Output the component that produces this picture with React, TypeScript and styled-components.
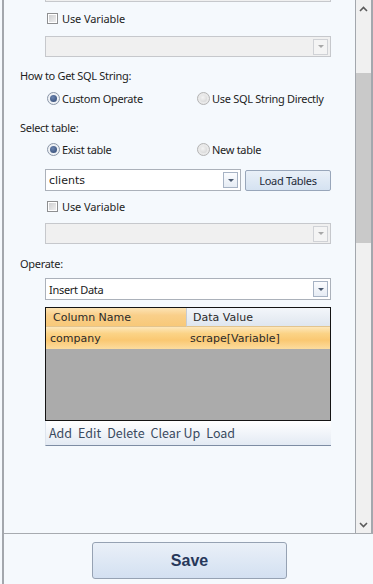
import styled, { createGlobalStyle } from 'styled-components';

const GlobalStyle = createGlobalStyle`
  html, body {
    margin: 0;
    padding: 0;
    background: #f5f9fd;
  }
  * {
    box-sizing: border-box;
  }
`;

const Frame = styled.div`
  width: 371px;
  height: 584px;
  display: flex;
  flex-direction: column;
  margin-left: 2px;
  border-left: 2px solid #a3a7ad;
  overflow: hidden;
  font-family: 'Noto Sans', 'Open Sans', sans-serif;
`;

const ScrollArea = styled.div`
  height: 534px;
  display: flex;
  border-bottom: 1px solid #a7abb0;
`;

const Content = styled.div`
  flex: 1;
  overflow: hidden;
  padding-left: 16px;
`;

const Inner = styled.div`
  margin-top: -19px;
  display: flex;
  flex-direction: column;
`;

const Scrollbar = styled.div`
  width: 18px;
  display: flex;
  flex-direction: column;
  align-items: center;
  border-left: 1px solid #a3a7ad;
  border-right: 2px solid #a3a7ad;
  background: #f0f0f0;
`;

const ScrollArrow = styled.div`
  height: 17px;
  width: 100%;
  display: flex;
  align-items: center;
  justify-content: center;
`;

const ScrollTrack = styled.div`
  flex: 1;
  width: 100%;
  padding-top: 56px;
`;

const Thumb = styled.div`
  width: 100%;
  height: 170px;
  background: #c9c9c9;
`;

const Label = styled.div<{ $top: number }>`
  margin-top: ${(p) => p.$top}px;
  height: 20px;
  display: flex;
  align-items: center;
  font-size: 11px;
  letter-spacing: -0.3px;
  color: #1e1e1e;
`;

const Indented = styled.div<{ $top: number }>`
  margin-top: ${(p) => p.$top}px;
  margin-left: 25px;
  width: 286px;
`;

const ComboBox = styled.div<{ $disabled?: boolean; $h?: number; $w?: number }>`
  height: ${(p) => p.$h ?? 22}px;
  width: ${(p) => (p.$w ? `${p.$w}px` : '100%')};
  flex-shrink: 0;
  display: flex;
  align-items: center;
  padding: 0 2px 0 2px;
  border: 1px solid ${(p) => (p.$disabled ? '#c6c8cc' : '#abb1ba')};
  background: ${(p) => (p.$disabled ? '#f0f0f0' : '#ffffff')};
`;

const ComboText = styled.span<{ $tahoma?: boolean }>`
  flex: 1;
  padding-left: 1px;
  font-family: ${(p) => (p.$tahoma ? "'DejaVu Sans', sans-serif" : "'Noto Sans', sans-serif")};
  font-size: 11px;
  letter-spacing: ${(p) => (p.$tahoma ? '0' : '-0.3px')};
  color: #1a1a1a;
`;

const DropButton = styled.div<{ $disabled?: boolean }>`
  width: 15px;
  height: 16px;
  display: flex;
  align-items: center;
  justify-content: center;
  border: 1px solid ${(p) => (p.$disabled ? '#d0d2d6' : '#a7b3c4')};
  background: ${(p) =>
    p.$disabled
      ? '#f4f4f4'
      : 'linear-gradient(#fbfcfe, #e6ecf4)'};
`;

const Arrow = styled.div<{ $disabled?: boolean }>`
  width: 0;
  height: 0;
  border-left: 3px solid transparent;
  border-right: 3px solid transparent;
  border-top: 3px solid ${(p) => (p.$disabled ? '#a8a8a8' : '#4b5a70')};
`;

const CheckRow = styled.div<{ $top: number }>`
  margin-top: ${(p) => p.$top}px;
  margin-left: 27px;
  height: 22px;
  display: flex;
  align-items: center;
  gap: 4px;
  font-size: 11px;
  letter-spacing: -0.1px;
  color: #1e1e1e;
`;

const CheckBox = styled.span`
  width: 11px;
  height: 11px;
  border: 1px solid #8e8f91;
  background: #ffffff;
  padding: 1px;
  display: inline-flex;
  &::after {
    content: '';
    flex: 1;
    background: linear-gradient(135deg, #cfd0d2, #eeeeef);
  }
`;

const RadioRow = styled.div<{ $top: number }>`
  margin-top: ${(p) => p.$top}px;
  margin-left: 27px;
  height: 20px;
  display: grid;
  grid-template-columns: 150px 1fr;
  align-items: center;
`;

const RadioItem = styled.div`
  display: flex;
  align-items: center;
  gap: 2px;
  font-size: 11px;
  letter-spacing: -0.3px;
  color: #1e1e1e;
`;

const Radio = styled.span<{ $checked?: boolean }>`
  width: 13px;
  height: 13px;
  border-radius: 50%;
  border: 1px solid ${(p) => (p.$checked ? '#8b97a8' : '#b4b4b4')};
  background: ${(p) => (p.$checked ? '#eef1f5' : '#e9e9e9')};
  display: inline-flex;
  align-items: center;
  justify-content: center;
  &::after {
    content: '';
    width: 7px;
    height: 7px;
    border-radius: 50%;
    background: ${(p) =>
      p.$checked
        ? 'radial-gradient(circle at 40% 35%, #6c85b0, #2e4670)'
        : 'radial-gradient(circle at 40% 35%, #f4f4f4, #d2d2d2)'};
  }
`;

const TableRow = styled.div`
  display: flex;
  gap: 4px;
`;

const LoadButton = styled.button`
  width: 86px;
  height: 21px;
  flex-shrink: 0;
  margin-top: 1px;
  border: 1px solid #98a6ba;
  border-radius: 2px;
  background: linear-gradient(#e9f0f8, #d5e2f1);
  font-family: 'Noto Sans', sans-serif;
  font-size: 11px;
  letter-spacing: -0.3px;
  color: #1e2a3a;
  padding: 0;
`;

const Grid = styled.div`
  height: 114px;
  border: 1px solid #141414;
  background: #ababab;
  display: flex;
  flex-direction: column;
  font-family: 'DejaVu Sans', sans-serif;
  font-size: 11px;
  color: #2a2a2a;
`;

const GridRow = styled.div<{ $h: number }>`
  height: ${(p) => p.$h}px;
  display: grid;
  grid-template-columns: 140px 1fr;
`;

const HeaderCell = styled.div<{ $active?: boolean }>`
  display: flex;
  align-items: center;
  padding-left: ${(p) => (p.$active ? '7px' : '6px')};
  background: ${(p) =>
    p.$active
      ? 'linear-gradient(#fce3b4, #f9cf8a 40%, #f8c979)'
      : 'linear-gradient(#f3f6fa, #dfe6ef)'};
  border-left: ${(p) => (p.$active ? 'none' : '1px solid #c6ccd5')};
  border-bottom: 1px solid #e2c48e;
`;

const DataRow = styled(GridRow)`
  background: linear-gradient(#fde7bb, #fbd386 30%, #fac872 60%, #fcdc9e);
`;

const DataCell = styled.div`
  display: flex;
  align-items: center;
  padding-left: 4px;
`;

const Toolbar = styled.div`
  height: 25px;
  display: flex;
  align-items: center;
  gap: 6px;
  padding-left: 3px;
  padding-bottom: 2px;
  background: linear-gradient(#ffffff, #e3eaf3);
  border-bottom: 1px solid #7d8ca3;
  border-left: 1px solid #dfe5ee;
  font-family: 'Noto Sans CJK SC', 'Noto Sans', sans-serif;
  font-size: 12.5px;
  color: #3a4a60;
`;

const Footer = styled.div`
  flex: 1;
  display: flex;
  justify-content: center;
  padding-top: 8px;
  padding-left: 2px;
`;

const SaveButton = styled.button`
  width: 195px;
  height: 37px;
  border: 1px solid #96a2b3;
  border-radius: 3px;
  background: linear-gradient(#eaf0f8, #d3e0f1);
  font-family: 'Liberation Sans', Arial, sans-serif;
  font-weight: bold;
  font-size: 16px;
  color: #27385a;
`;

const Chevron = ({ up }: { up?: boolean }) => (
  <svg width="9" height="6" viewBox="0 0 9 6">
    <path
      d={up ? 'M1 5 L4.5 1.5 L8 5' : 'M1 1 L4.5 4.5 L8 1'}
      fill="none"
      stroke="#5a5a5a"
      strokeWidth="1.6"
    />
  </svg>
);

const Combo = ({
  text,
  disabled,
  tahoma,
  h,
  w,
}: {
  text?: string;
  disabled?: boolean;
  tahoma?: boolean;
  h?: number;
  w?: number;
}) => (
  <ComboBox $disabled={disabled} $h={h} $w={w}>
    <ComboText $tahoma={tahoma}>{text}</ComboText>
    <DropButton $disabled={disabled}>
      <Arrow $disabled={disabled} />
    </DropButton>
  </ComboBox>
);

const App = () => {
  return (
    <>
      <GlobalStyle />
      <Frame>
        <ScrollArea>
          <Content>
            <Inner>
              <Indented $top={0}>
                <Combo disabled h={21} />
              </Indented>
              <CheckRow $top={5}>
                <CheckBox />
                Use Variable
              </CheckRow>
              <Indented $top={7}>
                <Combo disabled h={21} />
              </Indented>

              <Label $top={8}>How to Get SQL String:</Label>
              <RadioRow $top={3}>
                <RadioItem>
                  <Radio $checked />
                  Custom Operate
                </RadioItem>
                <RadioItem>
                  <Radio />
                  Use SQL String Directly
                </RadioItem>
              </RadioRow>

              <Label $top={9}>Select table:</Label>
              <RadioRow $top={2}>
                <RadioItem>
                  <Radio $checked />
                  Exist table
                </RadioItem>
                <RadioItem>
                  <Radio />
                  New table
                </RadioItem>
              </RadioRow>
              <Indented $top={10}>
                <TableRow>
                  <Combo text="clients" tahoma w={196} />
                  <LoadButton>Load Tables</LoadButton>
                </TableRow>
              </Indented>
              <CheckRow $top={4}>
                <CheckBox />
                Use Variable
              </CheckRow>
              <Indented $top={6}>
                <Combo disabled h={21} />
              </Indented>

              <Label $top={9}>Operate:</Label>
              <Indented $top={5}>
                <Combo text="Insert Data" />
              </Indented>
              <Indented $top={7}>
                <Grid>
                  <GridRow $h={19}>
                    <HeaderCell $active>Column Name</HeaderCell>
                    <HeaderCell>Data Value</HeaderCell>
                  </GridRow>
                  <DataRow $h={22}>
                    <DataCell>company</DataCell>
                    <DataCell>scrape[Variable]</DataCell>
                  </DataRow>
                </Grid>
                <Toolbar>
                  <span>Add</span>
                  <span>Edit</span>
                  <span>Delete</span>
                  <span>Clear Up</span>
                  <span>Load</span>
                </Toolbar>
              </Indented>
            </Inner>
          </Content>
          <Scrollbar>
            <ScrollArrow>
              <Chevron up />
            </ScrollArrow>
            <ScrollTrack>
              <Thumb />
            </ScrollTrack>
            <ScrollArrow>
              <Chevron />
            </ScrollArrow>
          </Scrollbar>
        </ScrollArea>
        <Footer>
          <SaveButton>Save</SaveButton>
        </Footer>
      </Frame>
    </>
  );
};

export default App;
